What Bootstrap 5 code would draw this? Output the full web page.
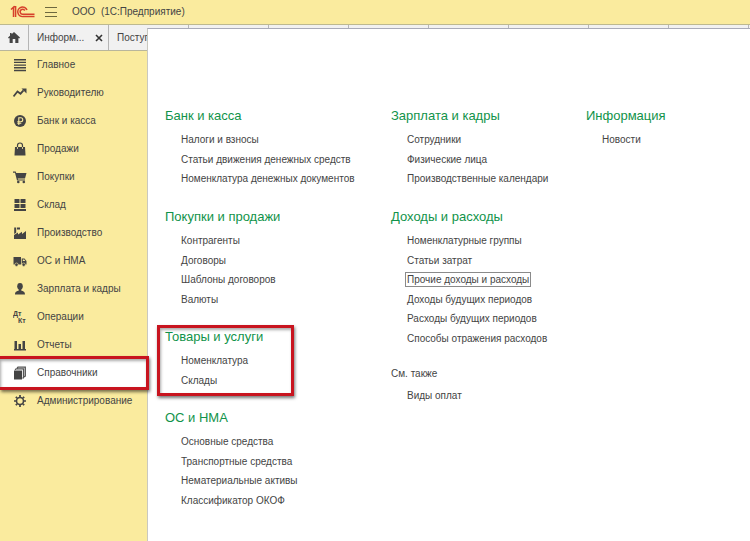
<!DOCTYPE html>
<html lang="ru">
<head>
<meta charset="utf-8">
<meta name="viewport" content="width=device-width, initial-scale=1">
<title>ООО (1С:Предприятие)</title>
<link href="https://cdn.jsdelivr.net/npm/bootstrap@5.3.0/dist/css/bootstrap.min.css" rel="stylesheet">
<style>
  :root { --side: 147px; --yellow: #faeb9e; --ink: #444; --red: #c8141f; }
  body { font-family: "Liberation Sans", Arial, sans-serif; font-size: 10px; line-height: 20px; color: var(--ink); background: #fff; }
  a { color: inherit; text-decoration: none; }
  a:hover { text-decoration: underline; }
  button { color: inherit; }
  .topbar { height: 24px; background: var(--yellow); padding-left: 10px; }
  .brand-logo { width: 25px; height: 16px; }
  .burger { margin-left: 10px; width: 12px; height: 12px; }
  .app-title { margin-left: 15px; }
  .tabs { height: 27px; background: #f1f1f1; border-top: 1px solid #bdb98f; border-bottom: 1px solid #b9b69c; }
  .tabs > * { flex: 0 0 80px; border-right: 1px solid #b5b5b5; }
  .tabs > .home { flex-basis: 29px; }
  .tab-open { padding-left: 8px; padding-right: 5px; }
  .workspace { min-height: calc(100vh - 51px); }
  .side { flex: 0 0 var(--side); background: var(--yellow); }
  .side a { display: flex; align-items: center; height: 28px; padding-left: 13px; white-space: nowrap; }
  .side svg { width: 14px; height: 14px; margin-right: 10px; flex: none; fill: var(--ink); }
  .side .current { position: relative; z-index: 3; background: #fff; }
  .side .current::after, .marked::after { content: ""; position: absolute; border: 3px solid var(--red); box-shadow: 1px 2px 3px #0008, inset 1px 2px 3px #0005; pointer-events: none; }
  .side .current::after { inset: -3px -2px -3px 0; border-left: 0; }
  .panel { position: relative; z-index: 2; min-width: 0; margin-top: -23px; padding: 73px 0 20px 17px; background: #fff; border-top: 1px solid #a9abb8; border-left: 1px solid #c9c8c0; }
  .sections { display: grid; grid-template-columns: 226fr 195fr 164fr; }
  .stack { display: flex; flex-direction: column; gap: 14px; }
  .stack h2 { margin: 0; font-size: 13px; line-height: 28px; font-weight: 400; color: #11934a; white-space: nowrap; }
  .stack h3 { margin: 0; font-size: 10px; line-height: 24px; font-weight: 400; }
  .stack ul { margin: 0; padding-left: 16px; list-style: none; }
  .stack li { height: 20px; white-space: nowrap; }
  .stack li:nth-child(even) { height: 19px; }
  .marked { position: relative; }
  .marked::after { top: 2px; left: -8px; width: 137px; bottom: -6px; }
  .focused { outline: 1px solid #8a8a8a; outline-offset: 1px; }
</style>
<script src="https://cdn.jsdelivr.net/npm/bootstrap@5.3.0/dist/js/bootstrap.bundle.min.js"></script>
</head>
<body>
<header class="topbar d-flex align-items-center">
  <svg class="brand-logo" viewBox="0 0 25 16" fill="none" stroke="#d6402b" stroke-width="1.5" role="img" aria-label="1С">
    <path d="M1 5.5 3.5 3.2V13M4 2.8H5.6V13"/>
    <path d="M17 6A4.8 4.8 0 1 0 13 12.6H24.500"/>
    <path d="M14.800 6.500A2.500 2.500 0 1 0 13 10.300H24.500"/>
  </svg>
  <button class="burger btn p-0 border-0 d-flex" type="button" aria-label="Меню">
    <svg width="12" height="12" viewBox="0 0 12 12" stroke="#6d683f" stroke-width="1"><path d="M0 1.500H12M0 6.500H12M0 10.500H12"/></svg>
  </button>
  <span class="app-title">ООО &nbsp;(1С:Предприятие)</span>
</header>

<div class="tabs d-flex overflow-hidden">
  <button class="home btn p-0 border-top-0 border-bottom-0 border-start-0 rounded-0 d-flex align-items-center justify-content-center" type="button" aria-label="Начальная страница">
    <svg width="12" height="11" viewBox="0 0 12 11" fill="#444"><path d="M6 0 12 5.600 11.200 6.500 10.400 5.900V11H7.300V7H4.700V11H1.600V5.900L.8 6.500 0 5.600 2 3.700V1H3.600V2.200Z"/></svg>
  </button>
  <div class="tab-open d-flex align-items-center justify-content-between">
    <a href="#">Информ...</a>
    <button class="btn p-0 border-0 d-flex" type="button" aria-label="Закрыть"><svg width="8" height="8" viewBox="0 0 8 8" stroke="#333" stroke-width="1.600"><path d="M1 1 7 7M7 1 1 7"/></svg></button>
  </div>
  <div class="tab-open d-flex align-items-center"><a href="#">Поступл</a></div>
  <div></div><div></div><div></div><div></div><div></div><div></div><div></div>
</div>

<div class="workspace d-flex">
  <nav class="side" aria-label="Разделы">
    <a href="#"><svg viewBox="0 0 14 14"><path d="M1 1H13V2.400H1ZM1 3.700H13V5.100H1ZM1 6.400H13V7.800H1ZM1 9.100H13V10.500H1ZM1 11.800H13V13.200H1Z"/></svg>Главное</a>
    <a href="#"><svg viewBox="0 0 14 14"><path d="M.5 10.500 4.500 5.500 7.500 7.700 10.500 4.300" fill="none" stroke="#444" stroke-width="1.800"/><path d="M8.500 2.500H13.500V7.500Z"/></svg>Руководителю</a>
    <a href="#"><svg viewBox="0 0 14 14"><circle cx="7" cy="7" r="6"/><path d="M5.800 11V3.800H7.800A1.900 1.900 0 0 1 7.800 7.700H4.300M4.300 9.300H8.300" fill="none" stroke="#faeb9e" stroke-width="1.100"/></svg>Банк и касса</a>
    <a href="#"><svg viewBox="0 0 14 14"><path d="M2 5H12L12.500 13.500H1.500Z"/><path d="M4.500 7V3.500A2.500 2.500 0 0 1 9.500 3.500V7" fill="none" stroke="#444" stroke-width="1.200"/><path d="M4.500 5V7M9.500 5V7" stroke="#faeb9e" stroke-width=".8"/></svg>Продажи</a>
    <a href="#"><svg viewBox="0 0 14 14"><path d="M0 1.500H2.700L3.200 3H13.500L12 8.500H4.800L5 9.500H12V10.600H4L2 2.700H0Z"/><circle cx="5.300" cy="12" r="1.300"/><circle cx="10.800" cy="12" r="1.300"/></svg>Покупки</a>
    <a href="#"><svg viewBox="0 0 14 14"><path d="M1.500 1H6.500V5H1.500ZM7.500 1H12.500V5H7.500ZM1.500 6H6.500V10H1.500ZM7.500 6H12.500V10H7.500ZM1 11H13V13H1Z"/></svg>Склад</a>
    <a href="#"><svg viewBox="0 0 14 14"><path d="M1 13V9L5 6.500V8.500L9 5.800V8L13 5V13Z"/><path d="M1.200 8V1.500H3.200V6.700ZM4 1.500H7V3.500H4Z"/></svg>Производство</a>
    <a href="#"><svg viewBox="0 0 14 14"><path d="M.5 3H8V10.500H.5ZM8.700 4.500H11.500L13.500 7V10.500H8.700Z"/><path d="M9.800 5.500H11.200L12.300 7H9.800Z" fill="#faeb9e"/><circle cx="3.500" cy="10.700" r="1.700" stroke="#faeb9e" stroke-width=".6"/><circle cx="10.700" cy="10.700" r="1.700" stroke="#faeb9e" stroke-width=".6"/></svg>ОС и НМА</a>
    <a href="#"><svg viewBox="0 0 14 14"><ellipse cx="7" cy="4.300" rx="2.800" ry="3.400"/><path d="M2 12.500C2 9.500 4 9.200 5.800 8.500V7H8.200V8.500C10 9.200 12 9.500 12 12.500Z"/></svg>Зарплата и кадры</a>
    <a href="#"><svg viewBox="0 0 14 14" font-size="7" font-weight="700"><text x="0" y="6">Дт</text><text x="5" y="13">Кт</text></svg>Операции</a>
    <a href="#"><svg viewBox="0 0 14 14"><path d="M1.500 3H4V11H1.500ZM5.500 6H8V11H5.500ZM9.500 3H12V11H9.500ZM1 11H13V12.500H1Z"/></svg>Отчеты</a>
    <a href="#" class="current" aria-current="page"><svg viewBox="0 0 14 14"><path d="M1 4.500H9V13.500H1Z"/><path d="M2 3.700 3.200 2.800H10.500V11.500L9.600 12.500M4 2 5 1.200H12.300V10L11.300 11" fill="none" stroke="#555" stroke-width="1.300"/></svg>Справочники</a>
    <a href="#"><svg viewBox="0 0 14 14"><circle cx="7" cy="7" r="3.500" fill="none" stroke="#444" stroke-width="1.600"/><path d="M7 1V3M7 11V13M1 7H3M11 7H13M2.800 2.800 4.200 4.200M9.800 9.800 11.200 11.200M2.800 11.200 4.200 9.800M9.800 4.200 11.200 2.800" stroke="#444" stroke-width="1.700"/></svg>Администрирование</a>
  </nav>

  <main class="panel flex-fill">
    <div class="sections">
      <div class="stack">
        <section><h2>Банк и касса</h2>
          <ul><li><a href="#">Налоги и взносы</a></li><li><a href="#">Статьи движения денежных средств</a></li><li><a href="#">Номенклатура денежных документов</a></li></ul></section>
        <section><h2>Покупки и продажи</h2>
          <ul><li><a href="#">Контрагенты</a></li><li><a href="#">Договоры</a></li><li><a href="#">Шаблоны договоров</a></li><li><a href="#">Валюты</a></li></ul></section>
        <section class="marked"><h2>Товары и услуги</h2>
          <ul><li><a href="#">Номенклатура</a></li><li><a href="#">Склады</a></li></ul></section>
        <section><h2>ОС и НМА</h2>
          <ul><li><a href="#">Основные средства</a></li><li><a href="#">Транспортные средства</a></li><li><a href="#">Нематериальные активы</a></li><li><a href="#">Классификатор ОКОФ</a></li></ul></section>
      </div>
      <div class="stack">
        <section><h2>Зарплата и кадры</h2>
          <ul><li><a href="#">Сотрудники</a></li><li><a href="#">Физические лица</a></li><li><a href="#">Производственные календари</a></li></ul></section>
        <section><h2>Доходы и расходы</h2>
          <ul><li><a href="#">Номенклатурные группы</a></li><li><a href="#">Статьи затрат</a></li><li><a href="#" class="focused">Прочие доходы и расходы</a></li><li><a href="#">Доходы будущих периодов</a></li><li><a href="#">Расходы будущих периодов</a></li><li><a href="#">Способы отражения расходов</a></li></ul></section>
        <section><h3>См. также</h3>
          <ul><li><a href="#">Виды оплат</a></li></ul></section>
      </div>
      <div class="stack">
        <section><h2>Информация</h2>
          <ul><li><a href="#">Новости</a></li></ul></section>
      </div>
    </div>
  </main>
</div>
</body>
</html>
